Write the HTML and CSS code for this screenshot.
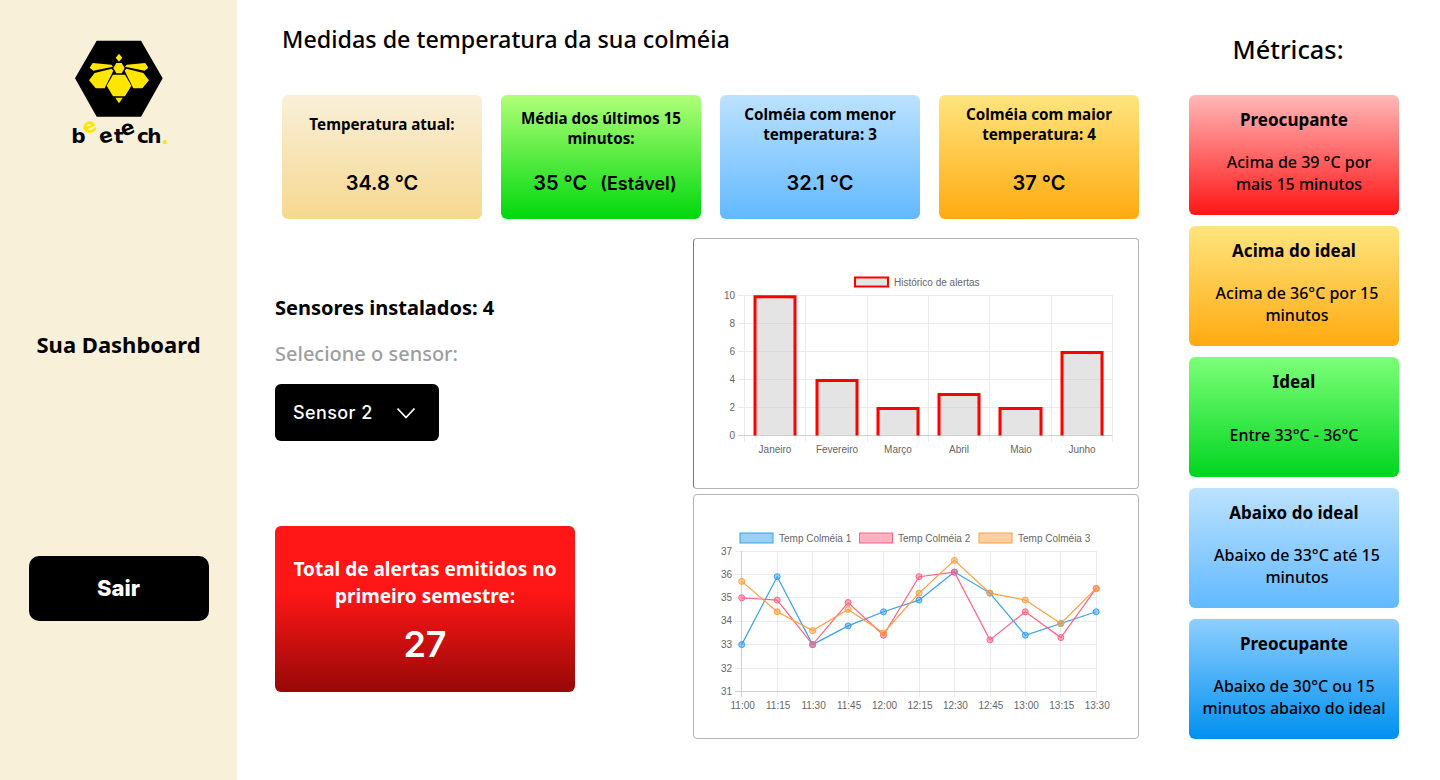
FILE: index.html
```html
<!DOCTYPE html>
<html lang="pt-BR">
<head>
<meta charset="utf-8">
<title>Beetech Dashboard</title>
<link rel="stylesheet" href="styles.css">
</head>
<body>
<div class="page">
  <aside class="sidebar">
    <svg class="logo" viewBox="0 0 480 420" width="160" height="140" aria-label="beetech">
      <polygon points="170,62 303,62 368,175 303,290 170,290 105,175" fill="#000"/>
      <polygon points="237,101 247,113 237,125 227,113" fill="#ffe600"/>
      <polygon points="229,129 245,129 254,144 245,160 229,160 220,144" fill="#ffe600"/>
      <polygon points="158,129 214,134 219,140 160,152 149,143" fill="#ffe600"/>
      <polygon points="316,129 260,134 255,140 314,152 325,143" fill="#ffe600"/>
      <polygon points="164,159 215,146 220,152 194,205 167,205 147,181" fill="#ffe600"/>
      <polygon points="310,159 259,146 254,152 280,205 307,205 327,181" fill="#ffe600"/>
      <polygon points="219,164 255,164 274,197 255,229 219,229 200,197" fill="#ffe600"/>
      <polygon points="226,233 248,233 237,250" fill="#ffe600"/>
      <text class="logo-word" x="94 138 182 222 250 291 322 364" y="370 345 372 370 350 370 370 372" rotate="0 -25 -15 0 -20 0 0 0">b<tspan class="logo-hi">e</tspan>etech<tspan class="logo-hi">.</tspan></text>
    </svg>
    <h2 class="side-title">Sua Dashboard</h2>
    <button class="logout">Sair</button>
  </aside>

  <main class="main">
    <h1 class="page-title">Medidas de temperatura da sua colméia</h1>
    <section class="cards">
      <article class="card c-sand">
        <h3>Temperatura atual:</h3>
        <p class="value">34.8 °C</p>
      </article>
      <article class="card c-green">
        <h3>Média dos últimos 15 minutos:</h3>
        <p class="value">35 °C <span class="status">(Estável)</span></p>
      </article>
      <article class="card c-blue">
        <h3>Colméia com menor temperatura: 3</h3>
        <p class="value">32.1 °C</p>
      </article>
      <article class="card c-orange">
        <h3>Colméia com maior temperatura: 4</h3>
        <p class="value">37 °C</p>
      </article>
    </section>

    <section class="lower">
      <div class="controls">
        <div class="sensor-block">
          <p class="sensors">Sensores instalados: 4</p>
          <p class="select-label">Selecione o sensor:</p>
          <div class="select">
            <span>Sensor 2</span>
            <svg viewBox="0 0 20 12" width="20" height="12"><path d="M1.5 1.5 10 10.5 18.500 1.500" fill="none" stroke="#fff" stroke-width="1.800"/></svg>
          </div>
        </div>
        <div class="alerts">
          <p class="alerts-title">Total de alertas emitidos no primeiro semestre:</p>
          <p class="alerts-value">27</p>
        </div>
      </div>

      <div class="charts">
        <div class="chart chart-bar">
          <svg viewBox="1 1 444 249" width="444" height="249">
            <g class="grid">
              <path d="M45 57.500H419.500M45 85.500H419.500M45 113.500H419.500M45 141.500H419.500M45 169.500H419.500"/>
              <path d="M51.500 57V204M112.500 57V204M174.500 57V204M235.500 57V204M296.500 57V204M358.500 57V204M419.500 57V204"/>
              <path class="axis" d="M45 197.500H419.500"/>
            </g>
            <g class="bars">
              <rect class="fill" x="62" y="59" width="40" height="138.500"/><path d="M62 197.500V58.800H102V197.500"/>
              <rect class="fill" x="124" y="142" width="40" height="55.500"/><path d="M124 197.500V142.500H164V197.500"/>
              <rect class="fill" x="185" y="170" width="40" height="27.500"/><path d="M185 197.500V170.500H225V197.500"/>
              <rect class="fill" x="246" y="156" width="40" height="41.500"/><path d="M246 197.500V156.500H286V197.500"/>
              <rect class="fill" x="307" y="170" width="41" height="27.500"/><path d="M307 197.500V170.500H348V197.500"/>
              <rect class="fill" x="369" y="114" width="40" height="83.500"/><path d="M369 197.500V114.500H409V197.500"/>
            </g>
            <rect x="162" y="39.500" width="33" height="9" fill="#e5e5e5" stroke="#f00" stroke-width="2"/>
            <text class="lbl" x="201" y="48">Histórico de alertas</text>
            <g class="lbl end">
              <text x="42" y="61">10</text><text x="42" y="89">8</text><text x="42" y="117">6</text><text x="42" y="145">4</text><text x="42" y="173">2</text><text x="42" y="201">0</text>
            </g>
            <g class="lbl mid">
              <text x="82" y="215">Janeiro</text><text x="144" y="215">Fevereiro</text><text x="205" y="215">Março</text><text x="266" y="215">Abril</text><text x="328" y="215">Maio</text><text x="389" y="215">Junho</text>
            </g>
          </svg>
        </div>
        <div class="chart chart-line">
          <svg viewBox="1 1 444 243" width="444" height="243">
            <g class="grid">
              <path d="M42 57.500H403M42 80.500H403M42 103.500H403M42 127.500H403M42 150.500H403M42 174.500H403M42 197.500H403"/>
              <path d="M48.500 57V203M84.500 57V203M119.500 57V203M155.500 57V203M190.500 57V203M226.500 57V203M261.500 57V203M297.500 57V203M332.500 57V203M367.500 57V203M403.500 57V203"/>
              <path class="axis" d="M42 197.500H403.500M48.500 57V203"/>
            </g>
            <rect x="47" y="39" width="33" height="10" fill="#9ad0f5" stroke="#36a2eb"/>
            <text class="lbl" x="86" y="48">Temp Colméia 1</text>
            <rect x="166.500" y="39" width="33" height="10" fill="#ffb1c1" stroke="#ff6384"/>
            <text class="lbl" x="205" y="48">Temp Colméia 2</text>
            <rect x="286" y="39" width="33" height="10" fill="#ffcf9f" stroke="#ff9f40"/>
            <text class="lbl" x="325" y="48">Temp Colméia 3</text>

            <polyline class="s1" points="48.700,150.600 84.200,82.700 119.600,150.600 155.100,131.900 190.500,117.800 226,106.100 261.400,78.100 296.900,99.100 332.300,141.200 367.800,129.500 403.200,117.800"/>
            <polyline class="s2" points="48.700,103.800 84.200,106.100 119.600,150.600 155.100,108.500 190.500,141.200 226,82.700 261.400,78.100 296.900,145.900 332.300,117.800 367.800,143.600 403.200,94.400"/>
            <polyline class="s3" points="48.700,87.400 84.200,117.800 119.600,136.600 155.100,115.500 190.500,138.900 226,99.100 261.400,66.400 296.900,99.100 332.300,106.100 367.800,129.500 403.200,94.400"/>
            <g class="d1">
              <circle cx="48.700" cy="150.600" r="3"/><circle cx="84.200" cy="82.700" r="3"/><circle cx="119.600" cy="150.600" r="3"/><circle cx="155.100" cy="131.900" r="3"/><circle cx="190.500" cy="117.800" r="3"/><circle cx="226" cy="106.100" r="3"/><circle cx="261.400" cy="78.100" r="3"/><circle cx="296.900" cy="99.100" r="3"/><circle cx="332.300" cy="141.200" r="3"/><circle cx="367.800" cy="129.500" r="3"/><circle cx="403.200" cy="117.800" r="3"/>
            </g>
            <g class="d2">
              <circle cx="48.700" cy="103.800" r="3"/><circle cx="84.200" cy="106.100" r="3"/><circle cx="119.600" cy="150.600" r="3"/><circle cx="155.100" cy="108.500" r="3"/><circle cx="190.500" cy="141.200" r="3"/><circle cx="226" cy="82.700" r="3"/><circle cx="261.400" cy="78.100" r="3"/><circle cx="296.900" cy="145.900" r="3"/><circle cx="332.300" cy="117.800" r="3"/><circle cx="367.800" cy="143.600" r="3"/><circle cx="403.200" cy="94.400" r="3"/>
            </g>
            <g class="d3">
              <circle cx="48.700" cy="87.400" r="3"/><circle cx="84.200" cy="117.800" r="3"/><circle cx="119.600" cy="136.600" r="3"/><circle cx="155.100" cy="115.500" r="3"/><circle cx="190.500" cy="138.900" r="3"/><circle cx="226" cy="99.100" r="3"/><circle cx="261.400" cy="66.400" r="3"/><circle cx="296.900" cy="99.100" r="3"/><circle cx="332.300" cy="106.100" r="3"/><circle cx="367.800" cy="129.500" r="3"/><circle cx="403.200" cy="94.400" r="3"/>
            </g>
            <g class="lbl end">
              <text x="39" y="61">37</text><text x="39" y="84">36</text><text x="39" y="107">35</text><text x="39" y="130">34</text><text x="39" y="154">33</text><text x="39" y="178">32</text><text x="39" y="201">31</text>
            </g>
            <g class="lbl mid">
              <text x="49.700" y="215">11:00</text><text x="85.200" y="215">11:15</text><text x="120.600" y="215">11:30</text><text x="156.100" y="215">11:45</text><text x="191.500" y="215">12:00</text><text x="227" y="215">12:15</text><text x="262.400" y="215">12:30</text><text x="297.900" y="215">12:45</text><text x="333.300" y="215">13:00</text><text x="368.800" y="215">13:15</text><text x="404.200" y="215">13:30</text>
            </g>
          </svg>
        </div>
      </div>
    </section>
  </main>

  <aside class="metrics">
    <h2 class="metrics-title">Métricas:</h2>
    <div class="metric-list">
      <article class="metric m-red"><h3>Preocupante</h3><p>Acima de 39 °C por<br>mais 15 minutos</p></article>
      <article class="metric m-orange"><h3>Acima do ideal</h3><p>Acima de 36°C por 15 minutos</p></article>
      <article class="metric m-green"><h3>Ideal</h3><p>Entre 33°C - 36°C</p></article>
      <article class="metric m-sky"><h3>Abaixo do ideal</h3><p>Abaixo de 33°C até 15 minutos</p></article>
      <article class="metric m-blue"><h3>Preocupante</h3><p>Abaixo de 30°C ou 15 minutos abaixo do ideal</p></article>
    </div>
  </aside>
</div>
</body>
</html>
```

FILE: styles.css
```css
* { box-sizing: border-box; }
html, body { margin: 0; padding: 0; background: #fff; }
body { font-family: "Noto Sans", "Open Sans", sans-serif; color: #000; }
h1, h2, h3, p { margin: 0; }

.page { display: flex; width: 1440px; height: 780px; overflow: hidden; }

/* Sidebar */
.sidebar { width: 237px; flex: none; background: #f9f0da; display: flex; flex-direction: column; align-items: center; padding-top: 20px; }
.logo { display: block; margin-left: 2px; }
.logo-word { font-family: "DejaVu Sans", sans-serif; font-weight: 700; font-size: 60px; fill: #000; }
.logo-hi { fill: #ffe600; }
.side-title { font-size: 22px; line-height: 30px; font-weight: 700; margin-top: 169px; }
.logout { margin-top: 197px; width: 180px; height: 65px; border: 0; border-radius: 10px; padding: 0 0 2px; background: #000; color: #fff; font: 800 22px "Inter", sans-serif; }

/* Main */
.main { width: 952px; flex: none; padding-top: 22px; }
.page-title { font-size: 23.3px; line-height: 34px; font-weight: 500; margin-left: 45px; }
.cards { display: flex; gap: 19px; margin: 39px 0 0 45px; }
.card { width: 200px; height: 124px; border-radius: 6px; display: flex; flex-direction: column; text-align: center; padding: 9px 12px 0; }
.card h3 { font-size: 15.2px; line-height: 20px; font-weight: 700; height: 40px; }
.c-sand h3 { padding-top: 10px; }
.c-green h3 { padding-top: 4px; }
.value { font: 600 20px/24px "Inter", sans-serif; margin-top: 27px; }
.c-green .value { padding-left: 8px; }
.status { font-size: 18px; margin-left: 8px; }
.c-sand { background: linear-gradient(#f9f0da, #f6d88f); }
.c-green { background: linear-gradient(#b0ff78, #00d80c); }
.c-blue { background: linear-gradient(#bce2ff, #62b9ff); }
.c-orange { background: linear-gradient(#ffe57f, #ffaa10); }

.lower { display: flex; margin-top: 19px; }
.controls { width: 456px; margin-left: 38px; flex: none; padding-top: 55px; }
.sensors { font-size: 20px; line-height: 30px; font-weight: 700; }
.select-label { font-size: 20px; line-height: 30px; font-weight: 500; color: #9e9e9e; margin-top: 16px; }
.select { width: 164px; height: 57px; margin-top: 15px; background: #000; color: #fff; border-radius: 6px; display: flex; align-items: center; justify-content: space-between; padding: 0 23px 0 18px; font: 500 18px "Inter", sans-serif; letter-spacing: .4px; }
.alerts { width: 300px; height: 166px; margin-top: 85px; border-radius: 6px; background: linear-gradient(#ff1616 0%, #ff1616 40%, #970808 100%); color: #fff; text-align: center; padding-top: 30px; }
.alerts-title { font-size: 19px; line-height: 27px; font-weight: 700; padding: 0 10px; }
.alerts-value { font: 600 36px/44px "Inter", sans-serif; margin-top: 12px; }

.charts { width: 446px; flex: none; margin-left: -38px; display: flex; flex-direction: column; gap: 5px; }
.chart { background: #fff; border: 1px solid #b3b3b3; border-radius: 4px; }
.chart svg { display: block; }
.chart-bar { height: 251px; border-left-color: #777; }
.chart-line { height: 245px; }
.grid path { fill: none; stroke: #ebebeb; stroke-width: 1; }
.grid .axis { stroke: #cfcfcf; }
.bars path { fill: none; stroke: #f00; stroke-width: 3; }
.bars .fill { fill: rgba(201, 201, 201, .5); }
.lbl { font: 10px "Liberation Sans", sans-serif; fill: #666; }
.end text { text-anchor: end; }
.mid text { text-anchor: middle; }
polyline { fill: none; stroke-width: 1.2; }
.s1 { stroke: #36a2eb; }
.s2 { stroke: #ff6384; }
.s3 { stroke: #ff9f40; }
.d1 circle { fill: rgba(54, 162, 235, .5); stroke: #36a2eb; }
.d2 circle { fill: rgba(255, 99, 132, .5); stroke: #ff6384; }
.d3 circle { fill: rgba(255, 159, 64, .5); stroke: #ff9f40; }

/* Metrics */
.metrics { width: 210px; flex: none; }
.metrics-title { font-size: 25.3px; line-height: 36px; font-weight: 500; text-align: center; margin: 31px 0 0 -12px; }
.metric-list { display: flex; flex-direction: column; gap: 11px; margin-top: 28px; }
.metric { height: 120px; border-radius: 6px; text-align: center; padding: 12px 10px 0; display: flex; flex-direction: column; }
.metric h3 { font-size: 17px; line-height: 26px; font-weight: 700; }
.metric p { font-size: 16px; line-height: 22px; font-weight: 500; flex: 1; display: flex; align-items: center; justify-content: center; padding-left: 6px; padding-bottom: 3px; }
.m-red p { padding-left: 10px; }
.m-green p, .m-blue p { padding-left: 0; }
.m-red { background: linear-gradient(#ffb8b8, #ff1616); }
.m-orange { background: linear-gradient(#ffe57f, #ffaa10); }
.m-green { background: linear-gradient(#7dff78, #00d520); }
.m-sky { background: linear-gradient(#bce2ff, #62b9ff); }
.m-blue { background: linear-gradient(#8ecfff, #0090f0); }
```
